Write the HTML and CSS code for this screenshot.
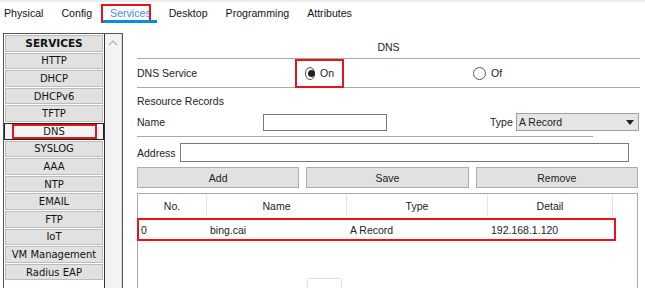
FILE: index.html
```html
<!DOCTYPE html>
<html>
<head>
<meta charset="utf-8">
<link rel="stylesheet" href="styles.css">
</head>
<body>
<div class="tabs">
  <span class="tab">Physical</span>
  <span class="tab">Config</span>
  <span class="tab active">Services</span>
  <span class="tab">Desktop</span>
  <span class="tab">Programming</span>
  <span class="tab">Attributes</span>
</div>
<div class="main">
  <div class="side">
    <div class="list">
      <div class="svc head">SERVICES</div>
      <div class="svc">HTTP</div>
      <div class="svc">DHCP</div>
      <div class="svc">DHCPv6</div>
      <div class="svc">TFTP</div>
      <div class="svc sel"><span class="mark">DNS</span></div>
      <div class="svc">SYSLOG</div>
      <div class="svc">AAA</div>
      <div class="svc">NTP</div>
      <div class="svc">EMAIL</div>
      <div class="svc">FTP</div>
      <div class="svc">IoT</div>
      <div class="svc">VM Management</div>
      <div class="svc">Radius EAP</div>
    </div>
    <div class="scroll">
      <svg width="10" height="6" viewBox="0 0 10 6"><path d="M1 5 L5 1 L9 5" fill="none" stroke="#b0b0b0" stroke-width="1.2"/></svg>
    </div>
  </div>
  <div class="content">
    <div class="title">DNS</div>
    <div class="svcrow">
      <span class="lbl">DNS Service</span>
      <span class="radio on-box"><span class="dot on"></span>On</span>
      <span class="radio off"><span class="dot"></span>Of</span>
    </div>
    <div class="rr">Resource Records</div>
    <div class="namerow">
      <span class="lbl">Name</span>
      <span class="input name-in"></span>
      <span class="typelbl">Type</span>
      <span class="select">A Record<svg width="8" height="5" viewBox="0 0 8 5"><path d="M0 0 H8 L4 5 Z" fill="#222"/></svg></span>
    </div>
    <div class="sep"></div>
    <div class="addrrow">
      <span class="lbl">Address</span>
      <span class="input addr-in"></span>
    </div>
    <div class="btns">
      <span class="btn">Add</span>
      <span class="btn">Save</span>
      <span class="btn">Remove</span>
    </div>
    <div class="table">
      <div class="thead">
        <span class="c1">No.</span><span class="c2">Name</span><span class="c3">Type</span><span class="c4">Detail</span><span class="c5"></span>
      </div>
      <div class="trow">
        <span class="c1">0</span><span class="c2">bing.cai</span><span class="c3">A Record</span><span class="c4">192.168.1.120</span>
      </div>
    </div>
  </div>
</div>
<div class="tip"></div>
</body>
</html>
```
FILE: styles.css
```css
html, body {
  margin: 0;
  padding: 0;
  background: #fff;
  width: 645px;
  height: 288px;
  overflow: hidden;
  font-family: "Liberation Sans", Arial, sans-serif;
  font-size: 10.5px;
  color: #222;
}
.tabs {
  display: flex;
  height: 24px;
  border-top: 2px solid #ececec;
  padding-left: 4px;
  gap: 18px;
  align-items: center;
  box-sizing: border-box;
  margin-bottom: 9px;
}
.tab {
  font-size: 10.6px;
  color: #111;
  line-height: 16px;
}
.tab.active {
  position: relative;
  color: #3a8fe8;
}
.tab.active::before {
  content: "";
  position: absolute;
  left: -9px;
  right: 0px;
  top: -1px;
  bottom: -2px;
  border: 2px solid #e8141c;
}
.tab.active::after {
  content: "";
  position: absolute;
  left: -7px;
  right: -6px;
  bottom: -2px;
  height: 3px;
  background: #0a8ed8;
}
.main {
  display: flex;
  height: 255px;
}
.side {
  margin-left: 3px;
  width: 120px;
  border: 1px solid #555;
  border-bottom: none;
  display: flex;
  box-sizing: border-box;
}
.list {
  width: 101px;
  border-right: 1px solid #333;
  padding: 1px 0 0 1px;
  display: flex;
  flex-direction: column;
  gap: 1px;
  box-sizing: border-box;
  font-family: "DejaVu Sans", Verdana, sans-serif;
  font-size: 10px;
}
.svc {
  height: 16.6px;
  border: 1px solid #bcbcbc;
  background: #e1e1e1;
  box-sizing: border-box;
  display: flex;
  align-items: center;
  justify-content: center;
  color: #111;
  width: 98px;
}
.svc.head {
  font-weight: bold;
  font-size: 10.5px;
}
.svc.sel {
  background: #f4f4f4;
  border: 1px solid #222;
  width: 100px;
  margin-left: -1px;
}
.mark {
  border: 2px solid #e8141c;
  width: 81px;
  height: 11px;
  box-sizing: content-box;
  display: flex;
  align-items: center;
  justify-content: center;
}
.scroll {
  flex: 1;
  background: #f3f3f3;
  border-right: 1px solid #d8d8d8;
  display: flex;
  justify-content: center;
  padding-top: 6px;
  box-sizing: border-box;
}
.content {
  margin-left: 14px;
  width: 503px;
  display: flex;
  flex-direction: column;
}
.title {
  height: 26px;
  border-bottom: 1px solid #a8a8a8;
  display: flex;
  align-items: center;
  justify-content: center;
  padding-top: 3px;
  box-sizing: border-box;
}
.svcrow {
  height: 29px;
  border-bottom: 1px solid #a8a8a8;
  display: flex;
  align-items: center;
  position: relative;
  box-sizing: border-box;
}
.lbl {
  width: 126px;
}
.svcrow .lbl { width: 169px; }
.radio {
  display: flex;
  align-items: center;
  gap: 5px;
}
.on-box {
  outline: 2px solid #e8141c;
  margin-left: -9px;
  padding: 0 8px 0 8px;
  height: 25px;
  width: 29px;
}
.off {
  margin-left: 131px;
}
.dot {
  width: 11px;
  height: 11px;
  border: 1px solid #555;
  border-radius: 50%;
  background: #fff;
  position: relative;
  box-sizing: content-box;
}
.dot.on::after {
  content: "";
  position: absolute;
  left: 2px;
  top: 2px;
  width: 7px;
  height: 7px;
  border-radius: 50%;
  background: #222;
}
.rr {
  height: 22px;
  display: flex;
  align-items: center;
  padding-top: 4px;
  box-sizing: border-box;
}
.namerow {
  height: 20px;
  display: flex;
  align-items: center;
  margin-top: 2px;
}
.input {
  height: 16px;
  border: 1px solid #7a7a7a;
  background: #fff;
  box-sizing: border-box;
  display: block;
}
.name-in {
  width: 124px;
  height: 17px;
}
.typelbl {
  margin-left: 103px;
  width: 26px;
}
.select {
  width: 123px;
  height: 18px;
  background: #e5e5e5;
  border: 1px solid #a0a0a0;
  box-sizing: border-box;
  display: flex;
  align-items: center;
  justify-content: space-between;
  padding: 0 4px 0 2px;
}
.sep {
  width: 456px;
  height: 0;
  border-top: 1px solid #a8a8a8;
  margin-top: 4px;
}
.addrrow {
  display: flex;
  align-items: center;
  height: 19px;
  margin-top: 6px;
}
.addrrow .lbl { width: 43px; }
.addr-in {
  width: 449px;
  height: 19px;
}
.btns {
  display: flex;
  gap: 7px;
  margin-top: 5px;
  width: 501px;
}
.btn {
  flex: 1;
  height: 21px;
  background: #e1e1e1;
  border: 1px solid #adadad;
  box-sizing: border-box;
  display: flex;
  align-items: center;
  justify-content: center;
}
.table {
  margin-top: 5px;
  width: 501px;
  flex: 1;
  border: 1px solid #a8a8a8;
  border-bottom: none;
  box-sizing: border-box;
}
.thead, .trow {
  display: flex;
}
.thead {
  height: 23px;
  align-items: center;
}
.thead span {
  text-align: center;
  border-right: 1px solid #e6e6e6;
  height: 22px;
  line-height: 22px;
  box-sizing: border-box;
}
.c1 { width: 69px; }
.c2 { width: 140px; }
.c3 { width: 141px; }
.c4 { width: 125px; }
.c5 { width: 24px; border-right: none !important; }
.trow {
  margin-top: 2px;
  width: 477px;
  height: 21px;
  outline: 2px solid #e8141c;
  outline-offset: -1px;
  align-items: center;
}
.trow span {
  padding-left: 3px;
  box-sizing: border-box;
}
.tip {
  position: absolute;
  left: 308px;
  top: 279px;
  width: 33px;
  height: 12px;
  background: #fff;
  box-shadow: 0 0 2px rgba(0,0,0,0.35);
}
```
